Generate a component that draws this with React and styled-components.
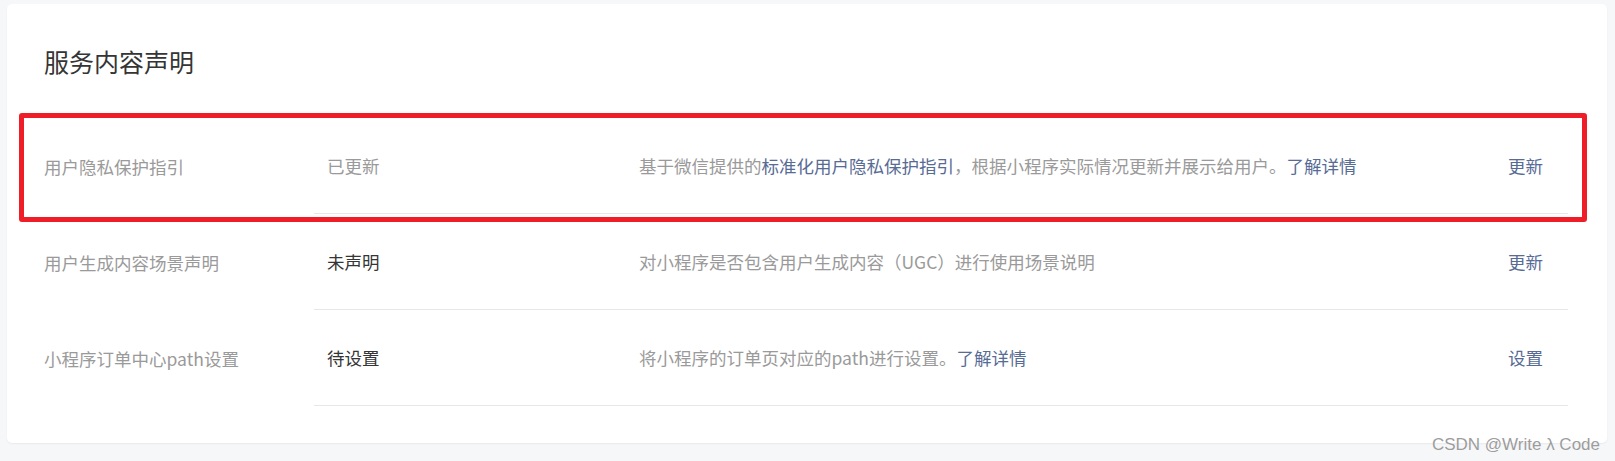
import React from 'react';
import styled, { createGlobalStyle } from 'styled-components';

const GlobalStyle = createGlobalStyle`
  body {
    margin: 0;
    background: #f6f7f9;
    font-family: "Noto Sans CJK SC", "Microsoft YaHei", sans-serif;
  }
`;

const colors = {
  title: '#353535',
  muted: '#9a9a9a',
  dark: '#353535',
  link: '#576b95',
  line: '#e7e7eb',
  annotation: '#ef1d27',
};

const Page = styled.div`
  position: relative;
  height: 461px;
  padding: 4px 8px 0 7px;
  box-sizing: border-box;
`;

const Card = styled.section`
  width: 1600px;
  height: 439px;
  box-sizing: border-box;
  padding: 40px 39px 0 37px;
  background: #fff;
  border-radius: 5px;
  box-shadow: 0 1px 2px rgba(0, 0, 0, 0.06);
`;

const Title = styled.h2`
  margin: 0 0 39px;
  font-size: 25px;
  line-height: 35px;
  font-weight: 400;
  color: ${colors.title};
`;

const Row = styled.div`
  position: relative;
  display: flex;
  height: 96px;
  font-size: 17.5px;
`;

const Label = styled.div`
  width: 270px;
  flex-shrink: 0;
  display: flex;
  align-items: center;
  color: ${colors.muted};
`;

const Body = styled.div`
  flex: 1;
  display: flex;
  align-items: center;
  border-bottom: 1px solid ${colors.line};
`;

const Status = styled.div`
  width: 312px;
  padding-left: 13px;
  flex-shrink: 0;
  color: ${(p) => (p.done ? colors.muted : colors.dark)};
`;

const Desc = styled.div`
  flex: 1;
  color: ${colors.muted};
`;

const Link = styled.a`
  color: ${colors.link};
  text-decoration: none;
  cursor: pointer;
`;

const Action = styled(Link)`
  padding-right: 25px;
`;

// red annotation frame drawn over the first row
const Highlight = styled.div`
  position: absolute;
  left: -25px;
  right: -19px;
  top: -5px;
  bottom: -8px;
  border: 5px solid ${colors.annotation};
  border-radius: 3px;
  pointer-events: none;
`;

const Watermark = styled.div`
  position: absolute;
  right: 15px;
  bottom: 6px;
  font-family: "Liberation Sans", Arial, sans-serif;
  font-size: 17px;
  color: #9c9c9c;
  text-shadow: 0 0 1px #fff;
`;

const items = [
  {
    label: '用户隐私保护指引',
    status: '已更新',
    done: true,
    desc: (
      <>
        基于微信提供的<Link>标准化用户隐私保护指引</Link>，根据小程序实际情况更新并展示给用户。
        <Link>了解详情</Link>
      </>
    ),
    action: '更新',
    highlight: true,
  },
  {
    label: '用户生成内容场景声明',
    status: '未声明',
    desc: '对小程序是否包含用户生成内容（UGC）进行使用场景说明',
    action: '更新',
  },
  {
    label: '小程序订单中心path设置',
    status: '待设置',
    desc: (
      <>
        将小程序的订单页对应的path进行设置。<Link>了解详情</Link>
      </>
    ),
    action: '设置',
  },
];

const App = () => (
  <Page>
    <GlobalStyle />
    <Card>
      <Title>服务内容声明</Title>
      {items.map((item) => (
        <Row key={item.label}>
          <Label>{item.label}</Label>
          <Body>
            <Status done={item.done}>{item.status}</Status>
            <Desc>{item.desc}</Desc>
            <Action>{item.action}</Action>
          </Body>
          {item.highlight && <Highlight />}
        </Row>
      ))}
    </Card>
    <Watermark>CSDN @Write λ Code</Watermark>
  </Page>
);

export default App;
